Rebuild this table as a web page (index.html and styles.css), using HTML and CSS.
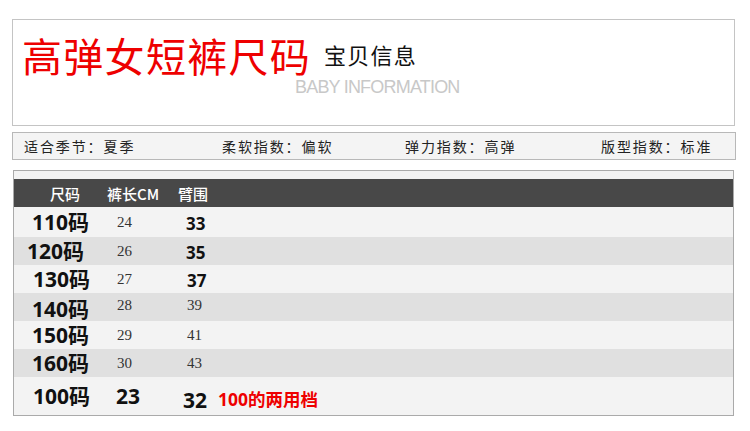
FILE: index.html
```html
<!DOCTYPE html>
<html lang="zh-CN">
<head>
<meta charset="utf-8">
<title>高弹女短裤尺码</title>
<link rel="stylesheet" href="styles.css">
</head>
<body>
<div class="page">
  <section class="head-box">
    <div class="head-row">
      <h1 class="title">高弹女短裤尺码</h1>
      <span class="subtitle">宝贝信息</span>
    </div>
    <div class="en">BABY INFORMATION</div>
  </section>

  <section class="info-bar">
    <span class="info">适合季节：夏季</span>
    <span class="info">柔软指数：偏软</span>
    <span class="info">弹力指数：高弹</span>
    <span class="info">版型指数：标准</span>
  </section>

  <section class="table">
    <div class="thead">
      <span class="th th-size">尺码</span>
      <span class="th">裤长CM</span>
      <span class="th">臂围</span>
    </div>
    <div class="row light r1">
      <span class="size">110码</span>
      <span class="serif">24</span>
      <span class="bold-num">33</span>
    </div>
    <div class="row dark">
      <span class="size shift-l">120码</span>
      <span class="serif">26</span>
      <span class="bold-num">35</span>
    </div>
    <div class="row light">
      <span class="size shift-r">130码</span>
      <span class="serif">27</span>
      <span class="bold-num nudge">37</span>
    </div>
    <div class="row dark">
      <span class="size low">140码</span>
      <span class="serif top">28</span>
      <span class="serif top sm-col">39</span>
    </div>
    <div class="row light">
      <span class="size">150码</span>
      <span class="serif">29</span>
      <span class="serif sm-col">41</span>
    </div>
    <div class="row dark">
      <span class="size">160码</span>
      <span class="serif">30</span>
      <span class="serif sm-col">43</span>
    </div>
    <div class="row light last">
      <span class="size shift-r">100码</span>
      <span class="big-num">23</span>
      <span class="last-cell"><span class="big-num low2">32</span><span class="note">100的两用档</span></span>
    </div>
  </section>
</div>
</body>
</html>
```

FILE: styles.css
```css
html, body {
  margin: 0;
  padding: 0;
  background: #ffffff;
}

.page {
  padding-top: 19px;
  font-family: "Noto Sans CJK SC", sans-serif;
  color: #111;
}

/* header box */
.head-box {
  box-sizing: border-box;
  width: 723px;
  height: 107px;
  margin-left: 12px;
  border: 1px solid #c4c4c4;
  padding: 15px 0 0 9px;
}

.head-row {
  display: flex;
  align-items: flex-start;
}

.title {
  margin: 0;
  font-size: 40px;
  line-height: 1;
  font-weight: 400;
  color: #ee0000;
  letter-spacing: 1.3px;
}

.subtitle {
  margin: 8px 0 0 13px;
  font-size: 22px;
  line-height: 1;
  color: #111;
  letter-spacing: 1.2px;
}

.en {
  margin: 3px 0 0 273px;
  font-family: "Liberation Sans", Arial, sans-serif;
  font-size: 18px;
  line-height: 1;
  color: #c8c8c8;
  letter-spacing: -0.8px;
}

/* info bar */
.info-bar {
  box-sizing: border-box;
  width: 724px;
  height: 28px;
  margin: 6px 0 0 12px;
  border: 1px solid #b8b8b8;
  background: #f4f4f4;
  display: grid;
  grid-template-columns: 198px 183px 196px auto;
  align-items: center;
  padding-left: 11px;
}

.info {
  font-size: 14px;
  line-height: 1;
  letter-spacing: 1.9px;
  color: #222;
}

/* table */
.table {
  box-sizing: border-box;
  width: 721px;
  margin: 10px 0 0 13px;
  border: 1px solid #aaaaaa;
  background: #f3f3f3;
  padding-top: 8px;
}

.thead {
  height: 28px;
  background: #484848;
  display: grid;
  grid-template-columns: 93px 71px auto;
  align-items: center;
}

.th {
  color: #ffffff;
  font-size: 15px;
  line-height: 1;
  font-weight: 500;
}

.th-size {
  padding-left: 36px;
}

.row {
  height: 28px;
  display: grid;
  grid-template-columns: 103px 68px auto;
  align-items: center;
}

.row.r1 { height: 30px; }
.row.last { height: 38px; }

.light { background: #f3f3f3; }
.dark { background: #e0e0e0; }

.size {
  padding-left: 18px;
  font-family: "Open Sans", "Noto Sans CJK SC", sans-serif;
  font-weight: 700;
  font-size: 21px;
  line-height: 1;
  color: #111;
}

.size.shift-l { padding-left: 13px; }
.size.shift-r { padding-left: 19px; }
.size.low { margin-top: 4px; }

.serif {
  font-family: "Liberation Serif", "Times New Roman", serif;
  font-size: 15px;
  line-height: 1;
  color: #333;
}

.serif.top { margin-top: -3px; }
.serif.sm-col { padding-left: 2px; }

.bold-num {
  padding-left: 1px;
  font-family: "Open Sans", sans-serif;
  font-weight: 700;
  font-size: 17px;
  line-height: 1;
  color: #111;
  margin-top: 3px;
}

.bold-num.nudge { padding-left: 2px; }

.big-num {
  font-family: "Open Sans", sans-serif;
  font-weight: 700;
  font-size: 21px;
  line-height: 1;
  color: #111;
  margin-left: -1px;
}

.last-cell {
  display: flex;
  align-items: center;
  gap: 11px;
  margin-left: -2px;
}

.big-num.low2 { margin-top: 8px; margin-left: 0; }

.note {
  margin-top: 8px;
  font-family: "Open Sans", "Noto Sans CJK SC", sans-serif;
  font-weight: 700;
  font-size: 17.5px;
  line-height: 1;
  color: #ee0000;
}
```
